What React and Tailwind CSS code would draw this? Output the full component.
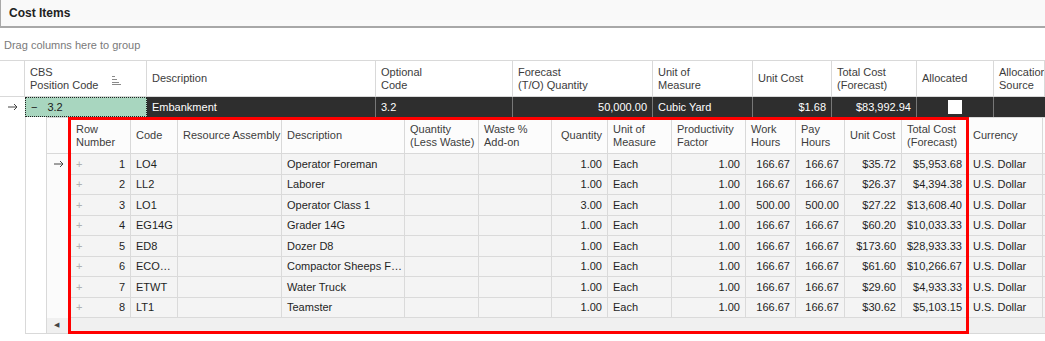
import React from 'react'

const mainCols = 'grid grid-cols-[25px_122px_229px_137px_140px_100px_79px_85px_77px_1fr]'
const detailCols =
  'grid grid-cols-[24px_60px_47px_104px_123px_74px_73px_56px_64px_74px_50px_49px_57px_66px_75px_1fr]'

const items = [
  ['1', 'LO4', 'Operator Foreman', '1.00', '1.00', '166.67', '166.67', '$35.72', '$5,953.68'],
  ['2', 'LL2', 'Laborer', '1.00', '1.00', '166.67', '166.67', '$26.37', '$4,394.38'],
  ['3', 'LO1', 'Operator Class 1', '3.00', '1.00', '500.00', '500.00', '$27.22', '$13,608.40'],
  ['4', 'EG14G', 'Grader 14G', '1.00', '1.00', '166.67', '166.67', '$60.20', '$10,033.33'],
  ['5', 'ED8', 'Dozer D8', '1.00', '1.00', '166.67', '166.67', '$173.60', '$28,933.33'],
  ['6', 'ECO…', 'Compactor Sheeps F…', '1.00', '1.00', '166.67', '166.67', '$61.60', '$10,266.67'],
  ['7', 'ETWT', 'Water Truck', '1.00', '1.00', '166.67', '166.67', '$29.60', '$4,933.33'],
  ['8', 'LT1', 'Teamster', '1.00', '1.00', '166.67', '166.67', '$30.62', '$5,103.15'],
]

function Arrow() {
  return (
    <svg width="10" height="8" viewBox="0 0 10 8" fill="none" stroke="#444" strokeWidth="1">
      <path d="M0 4h9M6 1l3 3-3 3" />
    </svg>
  )
}

function SortIcon() {
  return (
    <svg width="11" height="9" viewBox="0 0 11 9" stroke="#8a8a8a" strokeWidth="1">
      <path d="M1 0.5h3M1 3.5h5M1 6.5h7M1 8.5h9" />
    </svg>
  )
}

function Head({ children, right }) {
  return (
    <div
      className={`flex items-center overflow-hidden border-r border-[#d9d9d9] px-[5px] leading-[13px] text-[#3c3c3c] ${
        right ? 'justify-end text-right' : ''
      }`}
    >
      {children}
    </div>
  )
}

function Cell({ children, right, className = '' }) {
  return (
    <div
      className={`flex items-center overflow-hidden whitespace-nowrap border-r border-b border-[#dadada] px-[5px] ${
        right ? 'justify-end' : ''
      } ${className}`}
    >
      {children}
    </div>
  )
}

function DarkCell({ children, right }) {
  return (
    <div
      className={`flex items-center whitespace-nowrap border-r border-[#777] px-[5px] text-white ${
        right ? 'justify-end' : ''
      }`}
    >
      {children}
    </div>
  )
}

export default function App() {
  return (
    <div
      className="relative h-[341px] w-[1045px] overflow-hidden bg-white text-[11px] text-[#1f1f1f]"
      style={{ fontFamily: '"Liberation Sans", Arial, sans-serif' }}
    >
      <div className="flex h-[28px] items-center border-b-2 border-l border-[#a8a8a8] bg-[#f9f9f9] pl-[8px] text-[12px] font-bold text-[#222]">
        Cost Items
      </div>
      <div className="flex h-[32px] items-center pl-[4px] pt-[2px] text-[#7a7a7a]">Drag columns here to group</div>

      <div className="border-t border-[#d9d9d9]">
        <div className={`${mainCols} h-[36px] border-b border-[#d9d9d9] bg-white`}>
          <Head />
          <Head>
            <span>
              CBS
              <br />
              Position Code
            </span>
            <span className="ml-[12px] mt-[4px]">
              <SortIcon />
            </span>
          </Head>
          <Head>Description</Head>
          <Head>
            <span>
              Optional
              <br />
              Code
            </span>
          </Head>
          <Head>
            <span>
              Forecast
              <br />
              (T/O) Quantity
            </span>
          </Head>
          <Head>
            <span>
              Unit of
              <br />
              Measure
            </span>
          </Head>
          <Head>Unit Cost</Head>
          <Head>
            <span>
              Total Cost
              <br />
              (Forecast)
            </span>
          </Head>
          <Head>Allocated</Head>
          <Head>
            <span className="whitespace-nowrap">
              Allocation
              <br />
              Source
            </span>
          </Head>
        </div>

        <div className={`${mainCols} h-[20px]`}>
          <div className="flex items-center justify-center bg-white">
            <Arrow />
          </div>
          <div className="flex items-center border border-dotted border-[#222] bg-[#a8d6bf] px-[5px] text-[#1a1a1a]">
            <span className="mr-[10px]">−</span>3.2
          </div>
          <div className="col-span-8 grid grid-cols-[229px_137px_140px_100px_79px_85px_77px_1fr] bg-[#2e2e2e]">
            <DarkCell>Embankment</DarkCell>
            <DarkCell>3.2</DarkCell>
            <DarkCell right>50,000.00</DarkCell>
            <DarkCell>Cubic Yard</DarkCell>
            <DarkCell right>$1.68</DarkCell>
            <DarkCell right>$83,992.94</DarkCell>
            <div className="flex items-center justify-center border-r border-[#777]">
              <div className="h-[14px] w-[14px] bg-white" />
            </div>
            <div />
          </div>
        </div>

        <div className="ml-[25px] flex h-[217px] border-b border-l border-[#d9d9d9]">
          <div className="w-[20px] shrink-0 bg-white" />
          <div className="flex min-w-0 flex-1 flex-col border-l border-t border-[#d9d9d9]">
            <div className={`${detailCols} h-[36px] border-b border-[#d9d9d9] bg-[#fcfcfc]`}>
              <Head />
              <Head>
                <span>
                  Row
                  <br />
                  Number
                </span>
              </Head>
              <Head>Code</Head>
              <Head>
                <span className="whitespace-nowrap">Resource Assembly</span>
              </Head>
              <Head>Description</Head>
              <Head>
                <span className="whitespace-nowrap">
                  Quantity
                  <br />
                  (Less Waste)
                </span>
              </Head>
              <Head>
                <span>
                  Waste %
                  <br />
                  Add-on
                </span>
              </Head>
              <Head right>Quantity</Head>
              <Head>
                <span>
                  Unit of
                  <br />
                  Measure
                </span>
              </Head>
              <Head>
                <span>
                  Productivity
                  <br />
                  Factor
                </span>
              </Head>
              <Head>
                <span>
                  Work
                  <br />
                  Hours
                </span>
              </Head>
              <Head>
                <span>
                  Pay
                  <br />
                  Hours
                </span>
              </Head>
              <Head>Unit Cost</Head>
              <Head>
                <span>
                  Total Cost
                  <br />
                  (Forecast)
                </span>
              </Head>
              <Head>Currency</Head>
              <Head />
            </div>

            {items.map((r, i) => (
              <div key={r[0]} className={`${detailCols} h-[20.5px] bg-[#f4f4f4]`}>
                <div className="flex items-center justify-center border-r border-[#dadada] bg-[#fbfbfb]">
                  {i === 0 ? <Arrow /> : null}
                </div>
                <Cell>
                  <div className="flex w-full justify-between">
                    <span className="text-[#b0b0b0]">+</span>
                    <span>{r[0]}</span>
                  </div>
                </Cell>
                <Cell>{r[1]}</Cell>
                <Cell />
                <Cell>{r[2]}</Cell>
                <Cell />
                <Cell />
                <Cell right>{r[3]}</Cell>
                <Cell>Each</Cell>
                <Cell right>{r[4]}</Cell>
                <Cell right>{r[5]}</Cell>
                <Cell right>{r[6]}</Cell>
                <Cell right>{r[7]}</Cell>
                <Cell right>{r[8]}</Cell>
                <Cell>U.S. Dollar</Cell>
                <Cell />
              </div>
            ))}

            <div className="flex flex-1 bg-[#f0f0f0]">
              <div className="flex w-[18px] items-center justify-center">
                <span className="text-[7px] text-[#444]">◀</span>
              </div>
            </div>
          </div>
        </div>
      </div>

      <div className="pointer-events-none absolute left-[68px] top-[117px] h-[217px] w-[901px] border-[3px] border-[#ff0000]" />
    </div>
  )
}
